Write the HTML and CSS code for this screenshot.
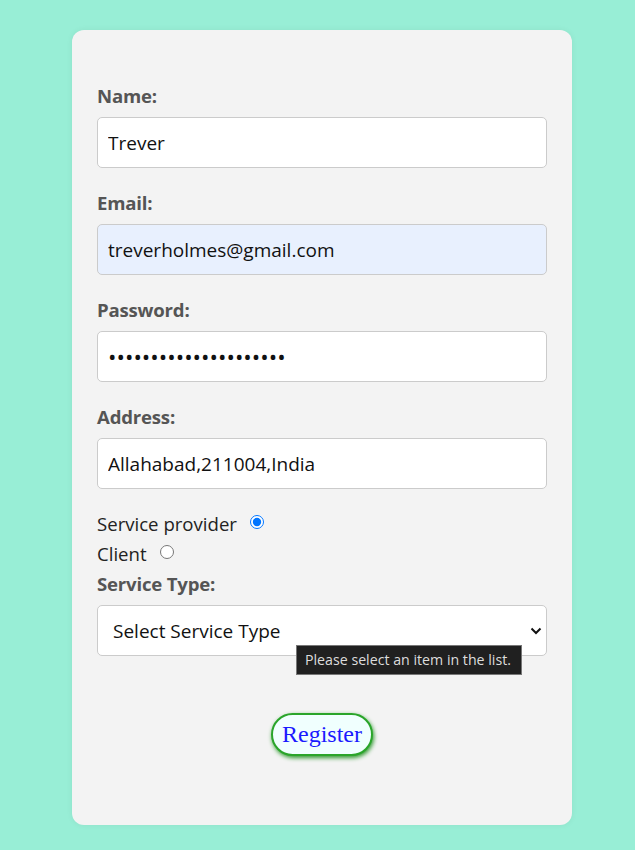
FILE: index.html
```html
<!DOCTYPE html>
<html lang="en">
<head>
<meta charset="utf-8">
<title>Register</title>
<link rel="stylesheet" href="styles.css">
</head>
<body>
<form class="card">
  <label class="label" for="name">Name:</label>
  <input class="field" id="name" type="text" value="Trever">
  <label class="label" for="email">Email:</label>
  <input class="field field-auto" id="email" type="email" value="treverholmes@gmail.com">
  <label class="label" for="pw">Password:</label>
  <input class="field field-pw" id="pw" type="password" value="treverholmes123456789">
  <label class="label" for="addr">Address:</label>
  <input class="field" id="addr" type="text" value="Allahabad,211004,India">
  <div class="radios">
    <div class="radio-row"><span>Service provider</span><input type="radio" name="role" checked></div>
    <div class="radio-row"><span>Client</span><input type="radio" name="role"></div>
  </div>
  <label class="label label-tight" for="svc">Service Type:</label>
  <div class="select-wrap">
    <select class="field select" id="svc">
      <option>Select Service Type</option>
    </select>
    <svg class="chev" width="12" height="8" viewBox="0 0 12 8"><path d="M1.5 1.5 L6 6 L10.5 1.5" fill="none" stroke="#111" stroke-width="2"/></svg>
    <div class="tooltip">Please select an item in the list.</div>
  </div>
  <div class="actions">
    <button type="button" class="btn">Register</button>
  </div>
</form>
</body>
</html>
```
FILE: styles.css
```css
html, body {
  margin: 0;
  padding: 0;
  background: #98eed6;
}
body {
  padding: 30px 0 25px 72px;
  font-family: "Open Sans", "Noto Sans", sans-serif;
}
.card {
  width: 500px;
  box-sizing: border-box;
  background: #f3f3f3;
  border-radius: 12px;
  box-shadow: 0 0 6px rgba(0,0,0,0.06);
  padding: 56px 25px 69px;
  display: flex;
  flex-direction: column;
}
.label {
  font-weight: 700;
  font-size: 18.6px;
  color: #555;
  line-height: 22px;
  margin-top: -1px;
  margin-bottom: 10px;
  letter-spacing: -0.2px;
}
.label-tight {
  margin-top: 8px;
  margin-bottom: 10px;
}
.field {
  box-sizing: border-box;
  width: 450px;
  height: 51px;
  border: 1px solid #cbcbcb;
  border-radius: 5px;
  background: #fff;
  padding: 0 10px;
  font-family: "Open Sans", "Noto Sans", sans-serif;
  font-size: 19px;
  color: #111;
  margin-bottom: 25px;
}
.field-auto {
  background: #e8f0fe;
}
.field-pw {
  font-size: 22.5px;
  letter-spacing: 0;
}
.radios {
  display: flex;
  flex-direction: column;
  gap: 8px;
  margin-top: -1px;
}
.radio-row {
  display: flex;
  align-items: center;
  font-size: 18.6px;
  color: #222;
  line-height: 22px;
}
.radio-row input {
  margin: 0 0 4px 13px;
  width: 14px;
  height: 14px;
}
.select-wrap {
  position: relative;
  width: 450px;
}
.select {
  appearance: none;
  -webkit-appearance: none;
  padding-left: 15px;
  margin-bottom: 0;
  height: 51px;
}
.chev {
  position: absolute;
  left: 433px;
  top: 22px;
}
.tooltip {
  position: absolute;
  left: 199px;
  top: 40px;
  background: #202020;
  color: #ddd;
  border: 1px solid #777;
  font-size: 14.2px;
  line-height: 28px;
  padding: 0 10px 0 8px;
  white-space: nowrap;
}
.actions {
  display: flex;
  justify-content: center;
  margin-top: 57px;
}
.btn {
  font-family: "Liberation Serif", serif;
  font-size: 24px;
  color: #1a1aff;
  background: #f0fffe;
  border: 2px solid #2aa52a;
  border-radius: 22px;
  padding: 6px 9px;
  box-shadow: 1px 2px 4px #2f9a2f;
  line-height: 27px;
}
```
